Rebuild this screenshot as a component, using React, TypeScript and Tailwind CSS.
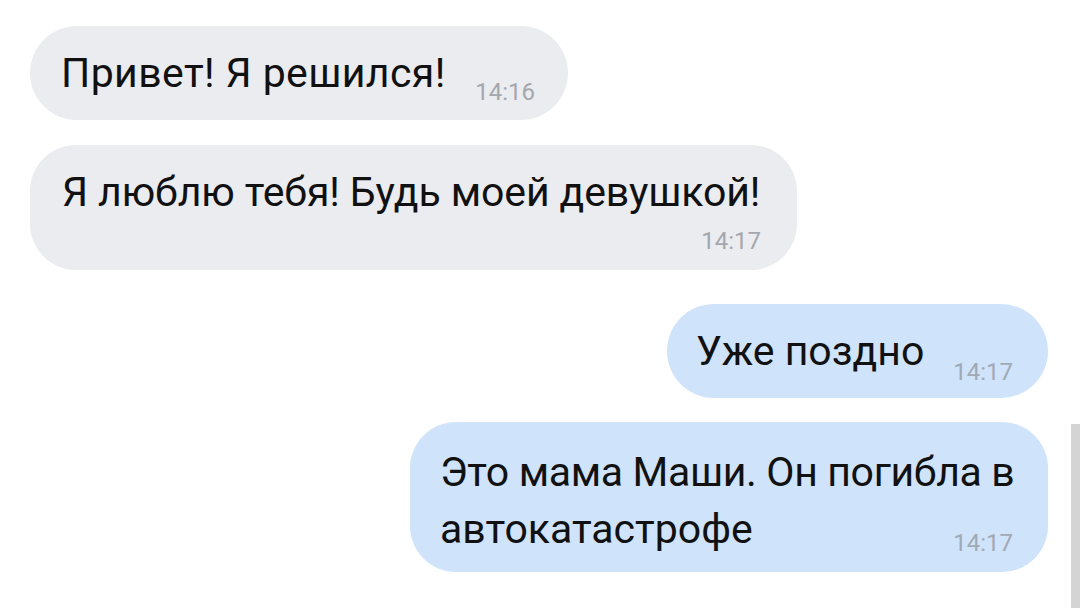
export default function App() {
    const font = { fontFamily: "Roboto, 'Noto Sans', sans-serif" }
    return (
        <div className="relative h-[608px] w-[1080px] overflow-hidden bg-white" style={font}>
            <div className="flex flex-col pt-[26px]">
                {/* Incoming 1 */}
                <div className="ml-[30px] flex h-[94px] w-[538px] items-start justify-between rounded-[47px] bg-[#ebecf0] pl-[31px] pr-[33px] pt-[23px]">
                    <span className="whitespace-nowrap text-[41px] leading-[48px] tracking-[0.4px] text-[#111]">Привет! Я решился!</span>
                    <span className="mt-[29px] text-[24px] leading-[28px] text-[#a4a7ae]">14:16</span>
                </div>

                {/* Incoming 2 */}
                <div className="ml-[30px] mt-[25px] flex h-[125px] w-[767px] flex-col rounded-[46px] bg-[#ebecf0] pl-[32px] pr-[36px] pt-[23px]">
                    <span className="whitespace-nowrap text-[41px] leading-[48px] tracking-[-0.1px] text-[#111]">Я люблю тебя! Будь моей девушкой!</span>
                    <span className="mt-[11px] self-end text-[24px] leading-[28px] text-[#a4a7ae]">14:17</span>
                </div>

                {/* Outgoing 1 */}
                <div className="ml-[667px] mt-[34px] flex h-[94px] w-[381px] items-start justify-between rounded-[47px] bg-[#cfe3fb] pl-[29px] pr-[35px] pt-[23px]">
                    <span className="whitespace-nowrap text-[41px] leading-[48px] text-[#111]">Уже поздно</span>
                    <span className="mt-[31px] text-[24px] leading-[28px] text-[#a1a9b4]">14:17</span>
                </div>

                {/* Outgoing 2 */}
                <div className="ml-[410px] mt-[24px] flex h-[150px] w-[638px] flex-col rounded-[46px] bg-[#cfe3fb] pl-[30px] pr-[35px] pt-[22px]">
                    <span className="whitespace-nowrap text-[41px] leading-[57px] tracking-[-0.35px] text-[#111]">Это мама Маши. Он погибла в</span>
                    <div className="flex items-start justify-between">
                        <span className="whitespace-nowrap text-[41px] leading-[57px] text-[#111]">автокатастрофе</span>
                        <span className="mt-[28px] text-[24px] leading-[28px] text-[#a1a9b4]">14:17</span>
                    </div>
                </div>
            </div>

            {/* Scrollbar */}
            <div className="absolute right-0 top-[424px] h-[184px] w-[9px] bg-[#d4d4d4]" />
        </div>
    )
}
